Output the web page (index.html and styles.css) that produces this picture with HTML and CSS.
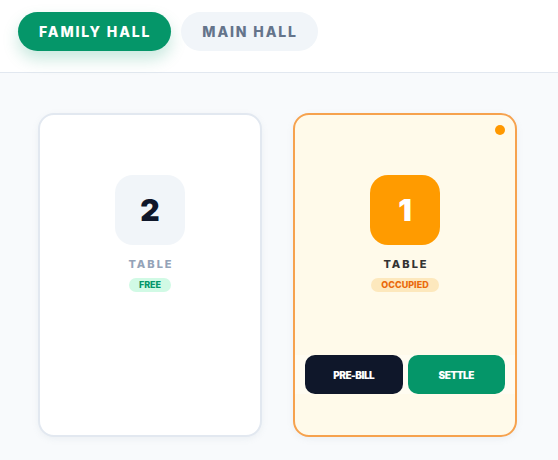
FILE: index.html
```html
<!DOCTYPE html>
<html>
<head>
<meta charset="utf-8">
<link rel="stylesheet" href="styles.css">
</head>
<body>
  <header class="tabs">
    <button class="tab tab-active">FAMILY HALL</button>
    <button class="tab">MAIN HALL</button>
  </header>
  <main class="grid">
    <div class="card">
      <div class="card-body">
        <div class="num">2</div>
        <div class="label">TABLE</div>
        <span class="badge badge-free">FREE</span>
      </div>
    </div>
    <div class="card card-occ">
      <span class="dot"></span>
      <div class="card-body">
        <div class="num num-occ">1</div>
        <div class="label label-occ">TABLE</div>
        <span class="badge badge-occ">OCCUPIED</span>
      </div>
      <div class="card-foot">
        <button class="act act-dark">PRE-BILL</button>
        <button class="act act-green">SETTLE</button>
      </div>
    </div>
  </main>
</body>
</html>
```
FILE: styles.css
```css
* { box-sizing: border-box; }
html, body { margin: 0; height: 100%; }
body {
  font-family: Inter, "Noto Sans", sans-serif;
  background: #f8fafc;
}
.tabs {
  display: flex;
  gap: 10px;
  padding: 12px 18px;
  height: 73px;
  background: #fff;
  border-bottom: 1px solid #e2e8f0;
}
.tab {
  height: 39px;
  padding: 0 20px 0 21px;
  border: 0;
  border-radius: 20px;
  font-family: inherit;
  font-size: 14px;
  font-weight: 800;
  letter-spacing: 1.85px;
  background: #f1f5f9;
  color: #64748b;
}
.tab-active {
  background: #059669;
  color: #fff;
  box-shadow: 0 8px 16px rgba(5, 150, 105, 0.22);
}
.grid {
  display: flex;
  gap: 31px;
  padding: 40px 38px;
}
.card {
  position: relative;
  width: 224px;
  height: 324px;
  border: 2px solid #e2e8f0;
  border-radius: 16px;
  background: #fff;
  display: flex;
  flex-direction: column;
  padding: 60px 0 41px;
  box-shadow: 0 2px 6px rgba(148, 163, 184, 0.12);
}
.card-occ {
  background: #fffaea;
  border-color: #f6a24e;
}
.dot {
  position: absolute;
  top: 10px;
  right: 10px;
  width: 10px;
  height: 10px;
  border-radius: 50%;
  background: #ff9800;
}
.card-body {
  display: flex;
  flex-direction: column;
  align-items: center;
}
.num {
  width: 70px;
  height: 70px;
  border-radius: 18px;
  background: #f1f5f9;
  color: #0f172a;
  font-size: 30px;
  font-weight: 900;
  display: flex;
  align-items: center;
  justify-content: center;
}
.num-occ {
  background: #ff9b00;
  color: #fff;
}
.label {
  margin-top: 12px;
  font-size: 11px;
  font-weight: 800;
  letter-spacing: 2px;
  padding-left: 2px;
  color: #94a3b8;
}
.label-occ { color: #333; }
.badge {
  margin-top: 7px;
  height: 14px;
  line-height: 14px;
  padding: 0 10px;
  border-radius: 7px;
  font-size: 9px;
  font-weight: 800;
}
.badge-free { background: #d1fae5; color: #059669; }
.badge-occ { background: #fde8bd; color: #ea6a0c; }
.card-foot {
  margin-top: auto;
  display: flex;
  gap: 5px;
  padding: 0 10px;
  background: rgba(255, 255, 255, 0.35);
}
.act {
  flex: 1;
  height: 39px;
  border: 0;
  border-radius: 10px;
  color: #fff;
  font-family: inherit;
  font-size: 10px;
  font-weight: 900;
  letter-spacing: -0.5px;
}
.act-dark { background: #0f172a; }
.act-green { background: #059669; }
```
